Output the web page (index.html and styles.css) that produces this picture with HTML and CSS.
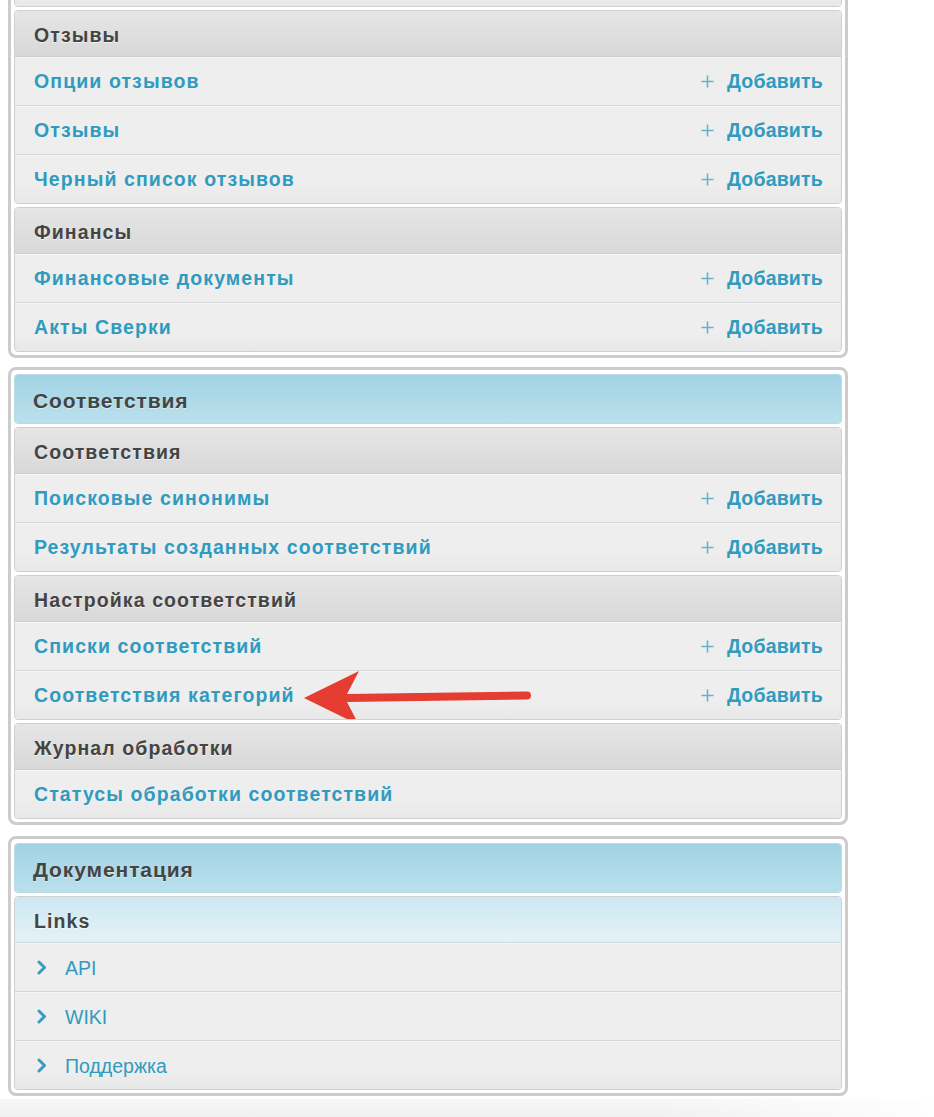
FILE: index.html
```html
<!DOCTYPE html>
<html lang="ru">
<head>
<meta charset="utf-8">
<title>Админ</title>
<link rel="stylesheet" href="styles.css">
</head>
<body>
<div class="page">
  <section class="panel panel-first">
    <div class="module">
      <ul class="rows"><li class="row"></li></ul>
    </div>
    <div class="module">
      <h3 class="group-title">Отзывы</h3>
      <ul class="rows">
        <li class="row"><a class="row-link" href="#">Опции отзывов</a><a class="add" href="#"><svg class="plus" viewBox="0 0 13 13" width="13" height="13"><path d="M6.5 0.5v12M0.5 6.5h12"/></svg>Добавить</a></li>
        <li class="row"><a class="row-link" href="#">Отзывы</a><a class="add" href="#"><svg class="plus" viewBox="0 0 13 13" width="13" height="13"><path d="M6.5 0.5v12M0.5 6.5h12"/></svg>Добавить</a></li>
        <li class="row"><a class="row-link" href="#">Черный список отзывов</a><a class="add" href="#"><svg class="plus" viewBox="0 0 13 13" width="13" height="13"><path d="M6.5 0.5v12M0.5 6.5h12"/></svg>Добавить</a></li>
      </ul>
    </div>
    <div class="module">
      <h3 class="group-title">Финансы</h3>
      <ul class="rows">
        <li class="row"><a class="row-link" href="#">Финансовые документы</a><a class="add" href="#"><svg class="plus" viewBox="0 0 13 13" width="13" height="13"><path d="M6.5 0.5v12M0.5 6.5h12"/></svg>Добавить</a></li>
        <li class="row"><a class="row-link" href="#">Акты Сверки</a><a class="add" href="#"><svg class="plus" viewBox="0 0 13 13" width="13" height="13"><path d="M6.5 0.5v12M0.5 6.5h12"/></svg>Добавить</a></li>
      </ul>
    </div>
  </section>

  <section class="panel panel-mid">
    <h2 class="panel-title">Соответствия</h2>
    <div class="module">
      <h3 class="group-title">Соответствия</h3>
      <ul class="rows">
        <li class="row"><a class="row-link" href="#">Поисковые синонимы</a><a class="add" href="#"><svg class="plus" viewBox="0 0 13 13" width="13" height="13"><path d="M6.5 0.5v12M0.5 6.5h12"/></svg>Добавить</a></li>
        <li class="row"><a class="row-link" href="#">Результаты созданных соответствий</a><a class="add" href="#"><svg class="plus" viewBox="0 0 13 13" width="13" height="13"><path d="M6.5 0.5v12M0.5 6.5h12"/></svg>Добавить</a></li>
      </ul>
    </div>
    <div class="module">
      <h3 class="group-title">Настройка соответствий</h3>
      <ul class="rows">
        <li class="row"><a class="row-link" href="#">Списки соответствий</a><a class="add" href="#"><svg class="plus" viewBox="0 0 13 13" width="13" height="13"><path d="M6.5 0.5v12M0.5 6.5h12"/></svg>Добавить</a></li>
        <li class="row"><a class="row-link" href="#">Соответствия категорий</a><a class="add" href="#"><svg class="plus" viewBox="0 0 13 13" width="13" height="13"><path d="M6.5 0.5v12M0.5 6.5h12"/></svg>Добавить</a>
          <svg class="arrow" viewBox="0 0 232 60" width="232" height="60"><path class="arrow-shaft" d="M46 30 L227 27.5"/><path class="arrow-head" d="M4 30 L59 3 L47 26 L47 34 L59 57 Z"/></svg>
        </li>
      </ul>
    </div>
    <div class="module">
      <h3 class="group-title">Журнал обработки</h3>
      <ul class="rows">
        <li class="row"><a class="row-link" href="#">Статусы обработки соответствий</a></li>
      </ul>
    </div>
  </section>

  <section class="panel panel-last">
    <h2 class="panel-title">Документация</h2>
    <div class="module">
      <h3 class="group-title links-title">Links</h3>
      <ul class="rows">
        <li class="row"><a class="plain-link" href="#"><svg class="chev" viewBox="0 0 10 15" width="10" height="15"><path d="M2 2L7.5 7.5L2 13"/></svg>API</a></li>
        <li class="row"><a class="plain-link" href="#"><svg class="chev" viewBox="0 0 10 15" width="10" height="15"><path d="M2 2L7.5 7.5L2 13"/></svg>WIKI</a></li>
        <li class="row"><a class="plain-link" href="#"><svg class="chev" viewBox="0 0 10 15" width="10" height="15"><path d="M2 2L7.5 7.5L2 13"/></svg>Поддержка</a></li>
      </ul>
    </div>
  </section>
</div>
<div class="footer"></div>
</body>
</html>
```

FILE: styles.css
```css
html, body {
  margin: 0;
  padding: 0;
  background: #fff;
  overflow: hidden;
}
body {
  font-family: "Liberation Sans", Arial, sans-serif;
  color: #444;
}
.page {
  width: 840px;
  margin-left: 8px;
}
.panel {
  border: 3px solid #cccccc;
  border-radius: 8px;
  padding: 4px 3px 3px 3px;
  background: #fff;
}
.panel-first {
  margin-top: -50px;
  margin-bottom: 9px;
}
.panel-mid {
  margin-bottom: 11px;
}
.panel-title {
  margin: 0 0 1px 0;
  height: 48px;
  line-height: 51px;
  border: 1px solid #b9dbe6;
  border-radius: 4px;
  background: linear-gradient(#a1d3e4, #bbe0ec);
  font-size: 21px;
  letter-spacing: 0.9px;
  font-weight: bold;
  color: #444;
  padding-left: 18px;
  text-shadow: 0 1px 0 rgba(255, 255, 255, 0.45);
}
.module {
  margin-top: 3px;
  border: 1px solid #cfcfcf;
  border-radius: 4px;
  background: #eeeeee;
  overflow: hidden;
}
.panel-first > .module:first-child {
  margin-top: 0;
}
.group-title {
  margin: 0;
  height: 45px;
  line-height: 48px;
  border-bottom: 1px solid #cfcfcf;
  background: linear-gradient(#e6e6e6, #d8d8d8);
  font-size: 19.5px;
  letter-spacing: 1.1px;
  font-weight: bold;
  color: #444;
  padding-left: 19px;
  text-shadow: 0 1px 0 rgba(255, 255, 255, 0.6);
}
.links-title {
  background: linear-gradient(#cde8f1, #e4f2f7);
  border-bottom-color: #cbd9de;
}
.rows {
  list-style: none;
  margin: 0;
  padding: 0;
}
.row {
  position: relative;
  height: 48px;
  display: flex;
  align-items: center;
  justify-content: space-between;
  padding: 0 18px 0 19px;
  border-bottom: 1px solid #d6d6d6;
  box-shadow: inset 0 1px 0 #f6f6f6;
  background: #eeeeee;
}
.row:last-child {
  border-bottom: 0;
  background: linear-gradient(#eeeeee 60%, #e8e8e8);
}
.row-link,
.add {
  color: #309bbf;
  font-weight: bold;
  font-size: 19.5px;
  text-decoration: none;
  line-height: 1;
  padding-top: 2px;
}
.row-link {
  letter-spacing: 1.1px;
}
.add {
  display: flex;
  align-items: center;
  gap: 13px;
  letter-spacing: 0.2px;
}
.plus {
  stroke: #62b3cf;
  stroke-width: 1.6;
  fill: none;
  margin-top: -2px;
}
.plain-link {
  display: flex;
  align-items: center;
  gap: 18px;
  color: #309bbf;
  font-size: 19.5px;
  line-height: 1;
  padding-top: 3px;
  text-decoration: none;
  padding-left: 3px;
}
.chev {
  stroke: #3a9cc0;
  stroke-width: 3;
  fill: none;
  stroke-linecap: round;
  stroke-linejoin: round;
  margin-top: -2px;
}
.arrow {
  position: absolute;
  left: 285px;
  top: -3px;
  overflow: visible;
}
.arrow-shaft {
  stroke: #e53d31;
  stroke-width: 8;
  stroke-linecap: round;
  fill: none;
}
.arrow-head {
  fill: #e53d31;
}
.footer {
  height: 30px;
  margin-top: 3px;
  background:
    linear-gradient(to right, rgba(255,255,255,0) 70%, rgba(255,255,255,0.9) 100%),
    linear-gradient(#f7f7f7, #ececec);
}
```
